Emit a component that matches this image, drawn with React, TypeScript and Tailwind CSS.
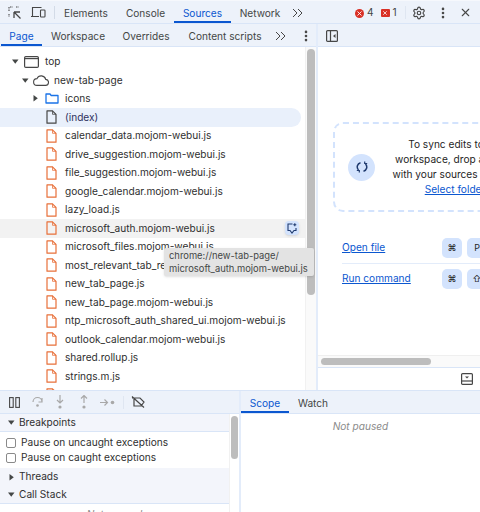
import React from 'react';
import { Settings, X, EllipsisVertical } from 'lucide-react';

const files = [
  'calendar_data.mojom-webui.js',
  'drive_suggestion.mojom-webui.js',
  'file_suggestion.mojom-webui.js',
  'google_calendar.mojom-webui.js',
  'lazy_load.js',
  'microsoft_auth.mojom-webui.js',
  'microsoft_files.mojom-webui.js',
  'most_relevant_tab_resumption.mojom-webui.js',
  'new_tab_page.js',
  'new_tab_page.mojom-webui.js',
  'ntp_microsoft_auth_shared_ui.mojom-webui.js',
  'outlook_calendar.mojom-webui.js',
  'shared.rollup.js',
  'strings.m.js',
  'task_module.mojom-webui.js',
];

const FileIcon = ({ color }: { color: string }) => (
  <svg className="shrink-0" width="11" height="14" viewBox="0 0 11 14" fill="none" stroke={color} strokeWidth="1.2">
    <path d="M1 .8h5.500L10 4.300v8.900H1z" strokeLinejoin="round" />
    <path d="M6.500 .8v3.500H10" strokeLinejoin="round" strokeWidth="0.8" />
  </svg>
);

const Caret = ({ open }: { open: boolean }) =>
  open ? (
    <svg className="shrink-0" width="7" height="5" viewBox="0 0 7 5" fill="#444746"><path d="M0 .5h6.500L3.250 4.800z" /></svg>
  ) : (
    <svg className="shrink-0" width="5" height="7" viewBox="0 0 5 7" fill="#444746"><path d="M.5 0v6.500L4.800 3.250z" /></svg>
  );

const Chevrons = () => (
  <svg className="shrink-0" width="11" height="10" viewBox="0 0 11 10" fill="none" stroke="#474747" strokeWidth="1">
    <path d="M1 1l4 4-4 4M6 1l4 4-4 4" />
  </svg>
);

const Tab = ({ label, active, className }: { label: string; active?: boolean; className: string }) => (
  <div
    className={`h-full shrink-0 pt-[5px] flex items-center justify-center border-b-2 whitespace-nowrap ${className} ${
      active ? 'text-[#0b57d0] border-[#0b57d0]' : 'text-[#444746] border-transparent'
    }`}
  >
    {label}
  </div>
);

const Key = ({ label }: { label: string }) => (
  <div className="w-5 h-5 shrink-0 rounded-[5px] bg-[#d3e3fd] flex items-center justify-center text-[9px] text-[#1f1f1f]">
    {label}
  </div>
);

const FileRow = ({ name, hovered }: { name: string; hovered?: boolean }) => (
  <div className={`h-[18.5px] shrink-0 pl-[46px] flex items-center gap-[8px] whitespace-nowrap ${hovered ? 'bg-[#f2f2f2]' : ''}`}>
    <FileIcon color="#e8703a" />
    <span>{name}</span>
  </div>
);

export default function App() {
  return (
    <div
      className="relative w-[480px] h-[512px] overflow-hidden bg-white flex flex-col text-[10.15px] text-[#303030]"
      style={{ fontFamily: 'Inter, "Liberation Sans", sans-serif' }}
    >
      {/* main tab bar */}
      <div className="h-[24px] shrink-0 flex items-center bg-[#edf2fa] border-t border-[#f6f8fc] border-b border-b-[#d9e5f7]">
        <div className="w-[54px] shrink-0 flex items-center pl-[8px] gap-[9px] pt-[1px]">
          <svg className="shrink-0" width="14" height="14" viewBox="0 0 14 14" fill="none" stroke="#474747" strokeWidth="1.1">
            <path d="M1 5V1h4M8 1h3M1 8v3" strokeDasharray="1.500 1" />
            <path d="M6 6h6M6 6v6M6 6l6.500 6.500" strokeWidth="1.300" />
          </svg>
          <svg className="shrink-0" width="15" height="13" viewBox="0 0 15 13" fill="none" stroke="#474747" strokeWidth="1.100">
            <path d="M1.500 10.500V1.500h9M0 10.500h8" />
            <rect x="9.500" y="4" width="4.500" height="7" rx="0.800" />
          </svg>
        </div>
        <div className="w-px h-[13px] shrink-0 bg-[#d3dbe7]" />
        <Tab label="Elements" className="w-[62px]" />
        <Tab label="Console" className="w-[57px]" />
        <Tab label="Sources" active className="w-[57px]" />
        <Tab label="Network" className="w-[58px]" />
        <div className="h-full flex items-center pt-[2px] shrink-0 pr-[52px] pl-[3px]"><Chevrons /></div>
        <div className="h-full pt-[2px] flex items-center gap-[3px] text-[#444746]">
          <div className="w-[9px] h-[9px] rounded-full bg-[#d93025] flex items-center justify-center">
            <X size={7} color="white" strokeWidth={3} />
          </div>
          <span>4</span>
        </div>
        <div className="h-full pt-[2px] ml-[7px] flex items-center gap-[3px] text-[#444746]">
          <div className="w-[9px] h-[8px] rounded-[1px] bg-[#d93025] flex items-center justify-center">
            <X size={6} color="white" strokeWidth={3} />
          </div>
          <span>1</span>
        </div>
        <div className="w-px h-[13px] bg-[#dfe6f1] ml-[8px] shrink-0" />
        <div className="h-full pt-[1px] flex items-center shrink-0">
          <Settings size={14} color="#474747" className="ml-[6px] shrink-0" />
          <EllipsisVertical size={14} color="#474747" strokeWidth={2.5} className="ml-[10px] shrink-0" />
          <X size={13} color="#474747" className="ml-[9px] shrink-0" />
        </div>
      </div>

      {/* upper area */}
      <div className="h-[366px] shrink-0 flex">
        {/* navigator */}
        <div className="w-[318px] shrink-0 flex flex-col border-r-2 border-[#e3ecfa]">
          <div className="h-[23px] shrink-0 flex items-center bg-[#edf2fa] border-b border-[#d9e5f7]">
            <Tab label="Page" active className="w-[41px] ml-[1px]" />
            <Tab label="Workspace" className="w-[72px]" />
            <Tab label="Overrides" className="w-[64px]" />
            <Tab label="Content scripts" className="w-[94px]" />
            <div className="h-full pt-[2px] flex items-center shrink-0 pl-[3px]">
              <Chevrons />
              <EllipsisVertical size={14} color="#474747" strokeWidth={2.5} className="ml-[13px] shrink-0" />
            </div>
          </div>
          <div className="flex-1 flex min-h-0">
            <div className="flex-1 min-w-0 overflow-hidden pt-[5.5px] flex flex-col">
              <div className="h-[18.5px] shrink-0 pl-[12px] flex items-center">
                <Caret open />
                <svg className="ml-[5px] shrink-0" width="15" height="12" viewBox="0 0 15 12" fill="none" stroke="#474747" strokeWidth="1.200">
                  <rect x="0.600" y="0.600" width="13.800" height="10.800" rx="1.200" />
                  <path d="M0.600 2.600h13.800" />
                </svg>
                <span className="ml-[6px]">top</span>
              </div>
              <div className="h-[18.5px] shrink-0 pl-[22px] flex items-center">
                <Caret open />
                <svg className="ml-[4px] shrink-0" width="16" height="11" viewBox="0 0 16 11" fill="none" stroke="#474747" strokeWidth="1.100">
                  <path d="M4 10.400h8.300a3 3 0 0 0 .4-6A4.600 4.600 0 0 0 4 3.600a3.400 3.400 0 0 0 0 6.800z" />
                </svg>
                <span className="ml-[5px]">new-tab-page</span>
              </div>
              <div className="h-[18.5px] shrink-0 pl-[33px] flex items-center">
                <Caret open={false} />
                <svg className="ml-[7px] shrink-0" width="14" height="11" viewBox="0 0 14 11" fill="none" stroke="#1a73e8" strokeWidth="1.300">
                  <path d="M1 1h4l1.200 1.500H13V10H1z" strokeLinejoin="round" />
                </svg>
                <span className="ml-[6px]">icons</span>
              </div>
              <div className="h-[18.5px] shrink-0 pl-[46px] mr-[4px] flex items-center gap-[8px] bg-[#e9f0fb] rounded-r-full">
                <FileIcon color="#474747" />
                <span className="text-[#303060]">(index)</span>
              </div>
              {files.map(f => (
                <FileRow key={f} name={f} hovered={f === 'microsoft_auth.mojom-webui.js'} />
              ))}
            </div>
            <div className="w-[11px] shrink-0 bg-[#fafafa] border-l border-[#f1f1f1] pt-[2px] flex justify-center">
              <div className="w-[8px] h-[246px] rounded-full bg-[#bdbdbd]" />
            </div>
          </div>
        </div>

        {/* editor */}
        <div className="flex-1 min-w-0 flex flex-col overflow-hidden">
          <div className="h-[23px] shrink-0 flex items-center pl-[8px] pt-[1px] border-b border-[#d9e5f7] bg-[#edf2fa]">
            <svg className="shrink-0" width="12" height="12" viewBox="0 0 12 12" fill="none" stroke="#474747" strokeWidth="1.200">
              <rect x="0.600" y="0.600" width="10.800" height="10.800" rx="1" />
              <path d="M4.500 0.600v10.800" />
              <path d="M9.500 4v4L7 6z" fill="#474747" stroke="none" />
            </svg>
          </div>
          <div className="flex-1 min-h-0 pt-[75px] pl-[15px]">
            <div className="w-[240px] h-[90px] rounded-[10px] border-2 border-dashed border-[#d3e3fd] flex items-center pl-[13px]">
              <div className="w-[27px] h-[27px] rounded-full bg-[#d3e3fd] flex items-center justify-center shrink-0">
                <svg width="12" height="12" viewBox="0 0 12 12" fill="none" stroke="#1f3a6e" strokeWidth="1.500">
                  <path d="M4.500 1.800a4.300 4.300 0 0 0-2 7.200M7.500 10.200a4.300 4.300 0 0 0 2-7.200" />
                  <path d="M.8 9.500h2.500v2M11.200 2.500H8.700v-2" strokeWidth="1.200" />
                </svg>
              </div>
              <div className="w-[150px] ml-[5px] shrink-0 text-center leading-[15px] text-[#1f1f1f] whitespace-nowrap">
                <div>To sync edits to the</div>
                <div>workspace, drop a folder</div>
                <div>with your sources here or:</div>
                <div className="text-[#0b57d0] underline">Select folder</div>
              </div>
            </div>
            <div className="mt-[26px] ml-[9px] w-[200px]">
              <div className="h-[26px] flex border-b border-[#e3ecfa] pb-[5px]">
                <span className="w-[100px] self-center text-[#0b57d0] underline">Open file</span>
                <div className="flex gap-[5px]"><Key label="⌘" /><Key label="P" /></div>
              </div>
              <div className="h-[20px] mt-[5px] flex items-center">
                <span className="w-[100px] text-[#0b57d0] underline">Run command</span>
                <div className="flex gap-[5px]"><Key label="⌘" /><Key label="⇧" /></div>
              </div>
            </div>
          </div>
          <div className="h-[13px] shrink-0 bg-[#fafafa] border-t border-[#efefef] border-b border-b-[#d9e5f7] pl-[3px] flex items-center">
            <div className="w-[110px] h-[7px] rounded-full bg-[#bdbdbd]" />
          </div>
          <div className="h-[22px] shrink-0 flex items-center justify-end pr-[7px]">
            <svg className="shrink-0" width="12" height="12" viewBox="0 0 12 12" fill="none" stroke="#474747" strokeWidth="1.200">
              <rect x="0.600" y="0.600" width="10.800" height="10.800" rx="1" />
              <path d="M0.600 8h10.800" />
              <path d="M4 3.500h4L6 5.500z" fill="#474747" stroke="none" />
            </svg>
          </div>
        </div>
      </div>

      {/* debugger */}
      <div className="flex-1 min-h-0 flex border-t border-[#d9e5f7] bg-white">
        <div className="w-[241px] shrink-0 flex flex-col border-r-2 border-[#e3ecfa]">
          <div className="h-[23px] shrink-0 bg-[#edf2fa] border-b border-[#d9e5f7] flex items-center pl-[9px]">
            <svg className="shrink-0" width="11" height="11" viewBox="0 0 11 11" fill="none" stroke="#474747" strokeWidth="1.100">
              <rect x="0.600" y="0.600" width="3.600" height="9.800" /><rect x="6.800" y="0.600" width="3.600" height="9.800" />
            </svg>
            <svg className="ml-[12px] shrink-0" width="12" height="12" viewBox="0 0 12 12" fill="none" stroke="#a8a8a8" strokeWidth="1.200">
              <path d="M1 6a4.500 4.500 0 0 1 9 0M10 2v4H6.500" /><circle cx="5.500" cy="9.500" r="1.300" fill="#a8a8a8" stroke="none" />
            </svg>
            <svg className="ml-[11px] shrink-0" width="10" height="14" viewBox="0 0 10 14" fill="none" stroke="#a8a8a8" strokeWidth="1.200">
              <path d="M5 0v7M2 5l3 3 3-3" /><circle cx="5" cy="12" r="1.600" fill="#a8a8a8" stroke="none" />
            </svg>
            <svg className="ml-[14px] shrink-0" width="10" height="14" viewBox="0 0 10 14" fill="none" stroke="#a8a8a8" strokeWidth="1.200">
              <path d="M5 8V1M2 3.500L5 .5l3 3" /><circle cx="5" cy="12" r="1.600" fill="#a8a8a8" stroke="none" />
            </svg>
            <svg className="ml-[11px] shrink-0" width="15" height="9" viewBox="0 0 15 9" fill="none" stroke="#a8a8a8" strokeWidth="1.200">
              <path d="M0 4.500h7M4.500 1.500l3 3-3 3" /><circle cx="12.500" cy="4.500" r="1.800" fill="#a8a8a8" stroke="none" />
            </svg>
            <div className="w-px h-[13px] bg-[#dfe6f1] ml-[8px] shrink-0" />
            <svg className="ml-[7px] shrink-0" width="14" height="12" viewBox="0 0 14 12" fill="none" stroke="#474747" strokeWidth="1.200">
              <path d="M1 2h8l4 4-3 4H3V2M1 .5l12 11" />
            </svg>
          </div>
          <div className="flex-1 min-h-0 flex">
            <div className="flex-1 min-w-0 flex flex-col overflow-hidden">
              <div className="h-[18px] shrink-0 bg-[#f3f5fb] border-b border-[#d9e5f7] flex items-center pl-[8px] gap-[4px]">
                <Caret open /><span>Breakpoints</span>
              </div>
              <div className="h-[15px] mt-[3px] shrink-0 flex items-center pl-[6px] gap-[5px]">
                <div className="w-[10px] h-[10px] rounded-[2px] border border-[#8a8a8a]" />
                <span>Pause on uncaught exceptions</span>
              </div>
              <div className="h-[15px] shrink-0 flex items-center pl-[6px] gap-[5px]">
                <div className="w-[10px] h-[10px] rounded-[2px] border border-[#8a8a8a]" />
                <span>Pause on caught exceptions</span>
              </div>
              <div className="h-[18px] mt-[3px] shrink-0 bg-[#f3f5fb] flex items-center pl-[9px] gap-[5px]">
                <Caret open={false} /><span>Threads</span>
              </div>
              <div className="h-[18px] shrink-0 bg-[#f3f5fb] border-b border-[#d9e5f7] flex items-center pl-[8px] gap-[4px]">
                <Caret open /><span>Call Stack</span>
              </div>
              <div className="text-center italic text-[#8a8a8a] pt-[3px]">Not paused</div>
            </div>
            <div className="w-[10px] shrink-0 pt-[2px] flex justify-center border-l border-[#f1f1f1]">
              <div className="w-[7px] h-[43px] rounded-full bg-[#bdbdbd]" />
            </div>
          </div>
        </div>
        <div className="flex-1 min-w-0 flex flex-col">
          <div className="h-[23px] shrink-0 bg-[#edf2fa] border-b border-[#d9e5f7] flex items-center">
            <Tab label="Scope" active className="w-[48px]" />
            <Tab label="Watch" className="w-[48px]" />
          </div>
          <div className="text-center italic text-[#8a8a8a] pt-[5px]">Not paused</div>
        </div>
      </div>

      {/* hover button on the selected row */}
      <div className="absolute left-[285px] top-[221px] w-[14px] h-[14px] rounded-[4px] bg-[#d3e3fd] flex items-center justify-center shadow-sm">
        <svg width="10" height="11" viewBox="0 0 10 11" fill="none" stroke="#1f3a6e" strokeWidth="1.100">
          <path d="M5.500 1H1v6.500h2L5 10l2-2.500h2V5" />
          <path d="M7.800 .3v3M6.300 1.800h3" />
        </svg>
      </div>

      {/* tooltip */}
      <div className="absolute left-[164px] top-[248px] w-[150px] h-[28px] bg-[#e3e3e3] rounded-[2px] shadow-sm pl-[5px] leading-[13px] pt-[1px] text-[9.400px] text-[#444746] whitespace-nowrap">
        <div>chrome://new-tab-page/</div>
        <div>microsoft_auth.mojom-webui.js</div>
      </div>
    </div>
  );
}
